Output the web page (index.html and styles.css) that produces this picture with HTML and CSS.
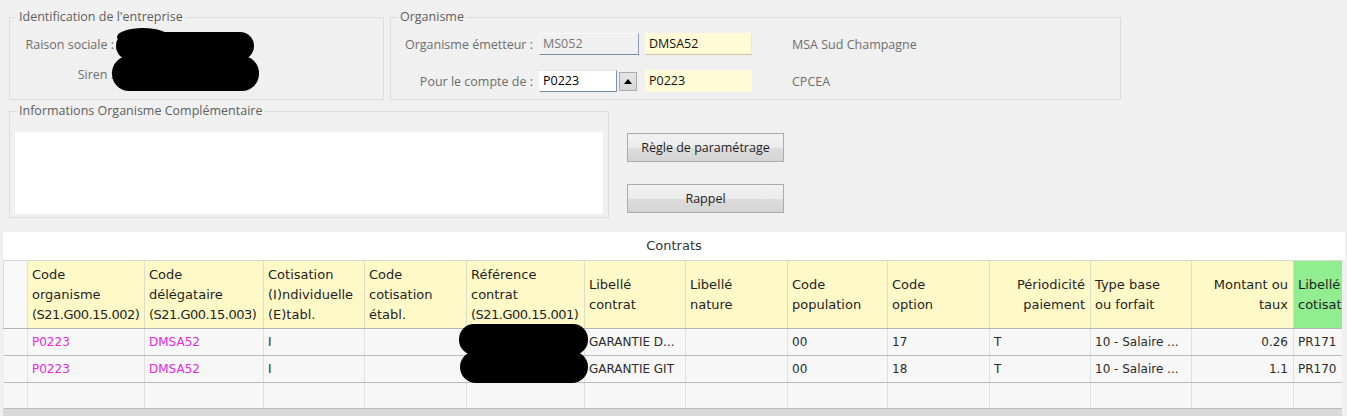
FILE: index.html
```html
<!DOCTYPE html>
<html lang="fr">
<head>
  <meta charset="UTF-8" />
  <title>Contrats - Organisme</title>
  <link rel="stylesheet" href="styles.css">
</head>
<body>

<div class="form-top">
  <fieldset class="group group-entreprise">
    <legend>Identification de l'entreprise</legend>
    <div class="rows rows-entreprise">
      <span class="lbl">Raison sociale :</span><span class="val"></span>
      <span class="lbl">Siren :</span><span class="val"></span>
    </div>
  </fieldset>

  <fieldset class="group group-organisme">
    <legend>Organisme</legend>
    <div class="rows rows-organisme">
      <span class="lbl">Organisme émetteur :</span>
      <div class="field field-ro">MS052</div>
      <div class="field field-yellow field-line">DMSA52</div>
      <span class="desc">MSA Sud Champagne</span>

      <span class="lbl">Pour le compte de :</span>
      <div class="combo">
        <div class="field field-edit">P0223</div>
        <button class="spin">
          <svg width="8" height="5" viewBox="0 0 8 5"><path d="M0 5 L4 0 L8 5 Z" fill="#000"/></svg>
        </button>
      </div>
      <div class="field field-yellow">P0223</div>
      <span class="desc">CPCEA</span>
    </div>
  </fieldset>
</div>

<div class="form-mid">
  <fieldset class="group group-info">
    <legend>Informations Organisme Complémentaire</legend>
    <div class="memo"></div>
  </fieldset>
  <div class="actions">
    <button class="btn">Règle de paramétrage</button>
    <button class="btn">Rappel</button>
  </div>
</div>

<section class="contrats">
  <div class="contrats-title">Contrats</div>
  <div class="grid-wrap">
    <table class="grid">
      <colgroup>
        <col style="width:24px">
        <col style="width:117px">
        <col style="width:119px">
        <col style="width:101px">
        <col style="width:102px">
        <col style="width:118px">
        <col style="width:101px">
        <col style="width:102px">
        <col style="width:100px">
        <col style="width:102px">
        <col style="width:101px">
        <col style="width:101px">
        <col style="width:102px">
        <col style="width:100px">
      </colgroup>
      <thead>
        <tr>
          <th class="rowhead"></th>
          <th>Code<br>organisme<br><span class="dsn">(S21.G00.15.002)</span></th>
          <th>Code<br>délégataire<br><span class="dsn">(S21.G00.15.003)</span></th>
          <th>Cotisation<br>(I)ndividuelle<br>(E)tabl.</th>
          <th>Code<br>cotisation<br>établ.</th>
          <th>Référence<br>contrat<br><span class="dsn">(S21.G00.15.001)</span></th>
          <th>Libellé<br>contrat</th>
          <th>Libellé<br>nature</th>
          <th>Code<br>population</th>
          <th>Code<br>option</th>
          <th class="num">Périodicité<br>paiement</th>
          <th>Type base<br>ou forfait</th>
          <th class="num">Montant ou<br>taux</th>
          <th class="key">Libellé<br>cotisation</th>
        </tr>
      </thead>
      <tbody>
        <tr>
          <td class="rowhead"></td>
          <td class="link">P0223</td>
          <td class="link">DMSA52</td>
          <td>I</td>
          <td></td>
          <td></td>
          <td>GARANTIE D...</td>
          <td></td>
          <td>00</td>
          <td>17</td>
          <td>T</td>
          <td>10 - Salaire ...</td>
          <td class="num">0.26</td>
          <td>PR171</td>
        </tr>
        <tr>
          <td class="rowhead"></td>
          <td class="link">P0223</td>
          <td class="link">DMSA52</td>
          <td>I</td>
          <td></td>
          <td></td>
          <td>GARANTIE GIT</td>
          <td></td>
          <td>00</td>
          <td>18</td>
          <td>T</td>
          <td>10 - Salaire ...</td>
          <td class="num">1.1</td>
          <td>PR170</td>
        </tr>
        <tr class="new-row">
          <td class="rowhead"></td>
          <td></td><td></td><td></td><td></td><td></td><td></td>
          <td></td><td></td><td></td><td></td><td></td><td></td><td></td>
        </tr>
      </tbody>
    </table>
  </div>
  <div class="grid-footer"></div>
</section>

<!-- masquage des données sensibles -->
<svg class="redact" width="1347" height="416" viewBox="0 0 1347 416">
  <g fill="#000">
    <rect x="116" y="32" width="138" height="28" rx="14"/>
    <ellipse cx="143" cy="37" rx="26" ry="9"/>
    <rect x="112" y="56" width="147" height="35" rx="17"/>
    <rect x="459" y="324" width="129" height="31" rx="15"/>
    <rect x="460" y="351" width="128" height="32" rx="16"/>
  </g>
</svg>

</body>
</html>
```

FILE: styles.css
```css
* {
  box-sizing: border-box;
}

body {
  margin: 0;
  background: #f0f0f0;
  font-family: 'Open Sans', 'Noto Sans', sans-serif;
  font-size: 12.5px;
  color: #1a1a1a;
  position: relative;
  width: 1347px;
  height: 416px;
  overflow: hidden;
}

/* ---- group boxes ---- */

.group {
  margin: 0;
  padding: 0;
  border: 1px solid #dcdcdc;
  min-width: 0;
}

.group legend {
  margin-left: 7px;
  padding: 0 2px;
  line-height: 16px;
  color: #5e5e5e;
}

.form-top {
  display: flex;
  gap: 6px;
  padding: 9px 0 0 9px;
}

.group-entreprise {
  width: 375px;
  height: 91px;
}

.group-organisme {
  width: 731px;
  height: 91px;
}

.rows {
  display: grid;
  align-items: center;
  padding-top: 8px;
}

.rows-entreprise {
  grid-template-columns: 104px 1fr;
  grid-auto-rows: 22px;
  row-gap: 8px;
}

.rows-organisme {
  grid-template-columns: 142px 100px 107px 1fr;
  grid-auto-rows: 22px;
  column-gap: 6px;
  row-gap: 15px;
}

.lbl {
  text-align: right;
  color: #6e6e6e;
  white-space: nowrap;
}

.desc {
  padding-left: 34px;
  color: #6e6e6e;
}

.field {
  height: 22px;
  line-height: 20px;
  padding: 0 3px;
  border: 1px solid transparent;
  white-space: nowrap;
}

.field-ro {
  background: #f0f0f0;
  color: #777;
  border-color: #fafafa #8a9bb0 #7a8ea3 #f6f6f6;
}

.field-yellow {
  background: #fffbd6;
  color: #111;
}

.field-line {
  border-bottom-color: #c9c6a8;
  border-right-color: #ece9cf;
}

.combo {
  display: flex;
  align-items: center;
  gap: 2px;
}

.field-edit {
  width: 78px;
  background: #fff;
  color: #000;
  border-color: #e6e6e6 #7d93a8 #6f8aa3 #fff;
}

.spin {
  width: 18px;
  height: 19px;
  padding: 0;
  margin: 0;
  border: 1px solid #ababab;
  background: linear-gradient(#e6e6e6, #d6d6d6);
  display: flex;
  align-items: center;
  justify-content: center;
}

/* ---- middle part ---- */

.form-mid {
  display: flex;
  align-items: flex-start;
  padding-left: 9px;
  margin-top: 3px;
}

.group-info {
  width: 600px;
  padding: 13px 5px 3px;
}

.group-info legend {
  margin-left: 2px;
}

.memo {
  height: 82px;
  background: #fff;
}

.actions {
  display: flex;
  flex-direction: column;
  gap: 22px;
  padding-top: 30px;
  margin-left: 18px;
}

.btn {
  width: 157px;
  height: 29px;
  margin: 0;
  padding: 0;
  font-family: inherit;
  font-size: 12.5px;
  color: #1e1e1e;
  border: 1px solid #acacac;
  background: linear-gradient(#f2f2f2 0%, #ebebeb 50%, #dddddd 51%, #d4d4d4 100%);
}

/* ---- grid contrats ---- */

.contrats {
  margin: 14px 0 0 3px;
  font-family: 'DejaVu Sans', Verdana, sans-serif;
  font-size: 12px;
}

.contrats-title {
  width: 1342px;
  height: 28px;
  line-height: 28px;
  text-align: center;
  background: #fff;
  color: #333;
  font-size: 13px;
}

.grid-wrap {
  width: 1339px;
  overflow: hidden;
}

.grid {
  width: 1390px;
  table-layout: fixed;
  border-collapse: collapse;
}

.grid th {
  height: 68px;
  padding: 3px 4px;
  text-align: left;
  vertical-align: middle;
  font-size: 13px;
  font-weight: normal;
  line-height: 20px;
  color: #1e1e1e;
  background: #fff9c8;
  border: 1px solid #dedcc8;
  border-top-color: #d6d6d6;
  border-bottom-color: #b4b4b4;
  white-space: nowrap;
  overflow: hidden;
}

.grid th .dsn {
  letter-spacing: -0.5px;
}

.grid th.rowhead {
  background: #f8f8f8;
  border-right-color: #dedede;
}

.grid th.key {
  background: #90ee90;
}

.grid .num {
  text-align: right;
  padding-right: 5px;
}

.grid td {
  height: 26px;
  padding: 1px 4px 0;
  line-height: 25px;
  color: #2b2b2b;
  background: #f7f7f7;
  border-right: 1px solid #e0e0e0;
  border-bottom: 1px solid #bababa;
  white-space: nowrap;
  overflow: hidden;
}

.grid td.link {
  color: #e02be0;
}

.grid td.rowhead {
  background: #f7f7f7;
}

.grid-footer {
  width: 1339px;
  height: 10px;
  background: #d9d9d9;
}

.redact {
  position: absolute;
  top: 0;
  left: 0;
  pointer-events: none;
}
```
